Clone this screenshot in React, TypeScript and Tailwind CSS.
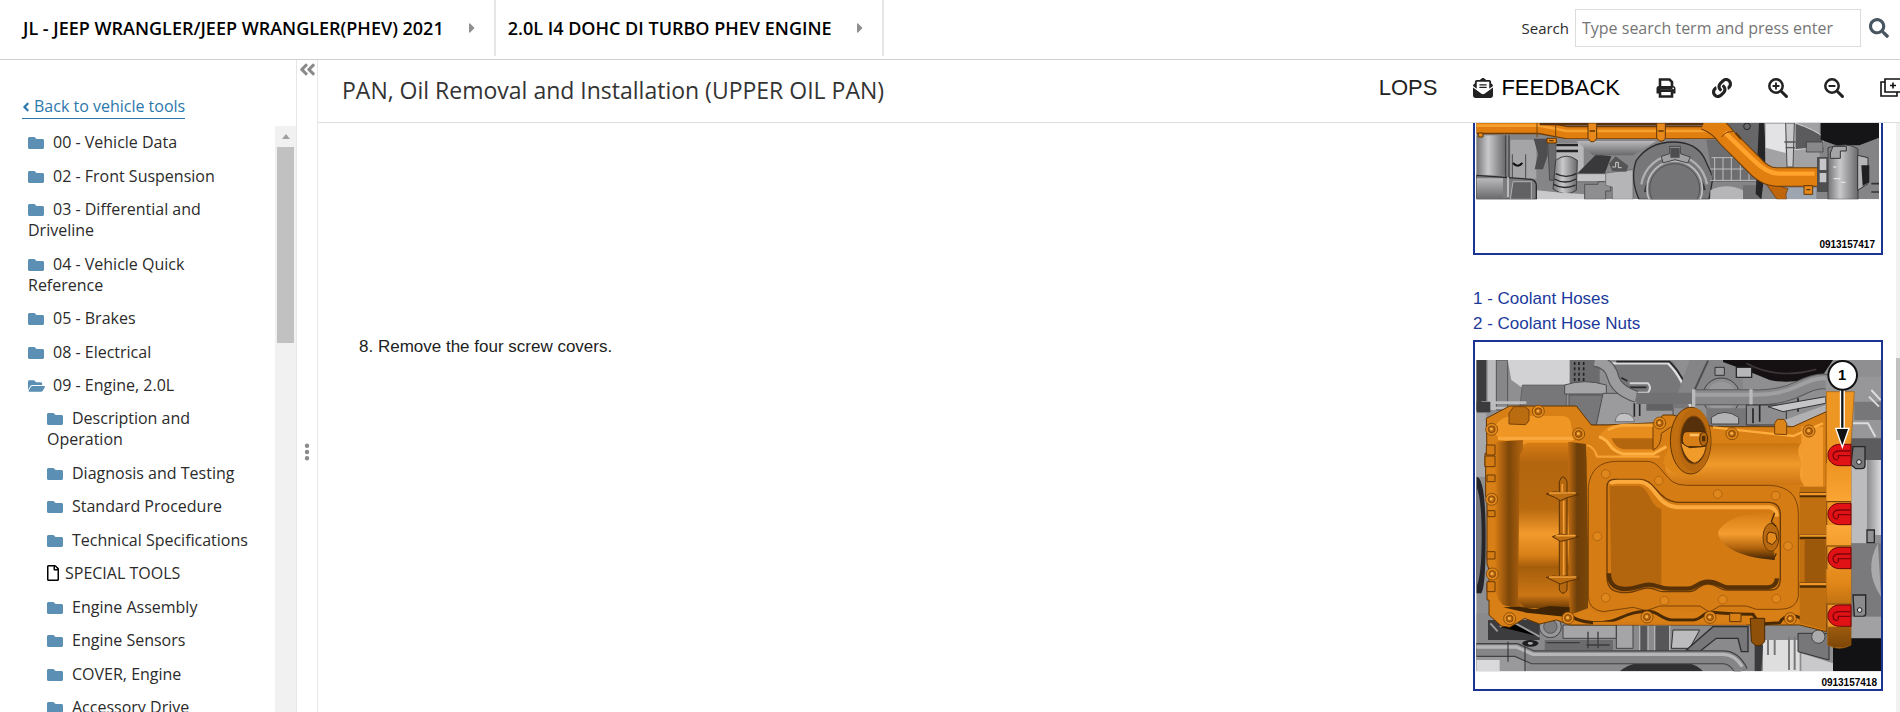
import React from "react";
import { FaAngleDoubleLeft, FaAngleLeft, FaFolder, FaFolderOpen, FaLink, FaRegFile, FaSearch, FaCaretRight } from "react-icons/fa";
import { FaEllipsisVertical, FaEnvelopeOpenText } from "react-icons/fa6";

type Node = { label: string; kind?: "folder" | "open" | "file"; children?: Node[] };

const tree: Node[] = [
  { label: "00 - Vehicle Data" },
  { label: "02 - Front Suspension" },
  { label: "03 - Differential and Driveline" },
  { label: "04 - Vehicle Quick Reference" },
  { label: "05 - Brakes" },
  { label: "08 - Electrical" },
  {
    label: "09 - Engine, 2.0L",
    kind: "open",
    children: [
      { label: "Description and Operation" },
      { label: "Diagnosis and Testing" },
      { label: "Standard Procedure" },
      { label: "Technical Specifications" },
      { label: "SPECIAL TOOLS", kind: "file" },
      { label: "Engine Assembly" },
      { label: "Engine Sensors" },
      { label: "COVER, Engine" },
      { label: "Accessory Drive" },
    ],
  },
];

function TreeIcon({ kind = "folder" }: { kind?: Node["kind"] }) {
  if (kind === "file") return <FaRegFile className="mr-1.5 inline h-4 w-3 align-[-2px] text-black" />;
  if (kind === "open") return <FaFolderOpen className="mr-2 inline h-4 w-[17px] align-[-3px] text-[#5b8fb3]" />;
  return <FaFolder className="mr-[9px] inline size-4 align-[-3px] text-[#5b8fb3]" />;
}

function Tree({ nodes, nested = false }: { nodes: Node[]; nested?: boolean }) {
  return (
    <ul className={nested ? "pl-[19px]" : "pl-7 pr-5"}>
      {nodes.map((n) => (
        <li key={n.label} className="even:mt-px">
          <a href="#" className="block py-1.5 leading-[21px]">
            <TreeIcon kind={n.kind} />
            {n.label}
          </a>
          {n.children && <Tree nodes={n.children} nested />}
        </li>
      ))}
    </ul>
  );
}

function PrintIcon() {
  return (
    <svg viewBox="0 0 20 20" className="size-5" fill="none" stroke="#222" strokeWidth="2.6">
      <path d="M4 9V1.5h9.5L16 4v5" />
      <path d="M0.5 15.5V10.5Q0.5 8 3 8H17Q19.5 8 19.5 10.5V15.5H16V11.8H4V15.5Z" fill="#222" stroke="none" />
      <path d="M4 12.8h12v5.7H4z" fill="#fff" />
      <circle cx="17.2" cy="10.4" r="0.8" fill="#fff" stroke="none" />
    </svg>
  );
}

function ZoomIcon({ plus = false }: { plus?: boolean }) {
  return (
    <svg viewBox="0 0 20 20" className="size-5" fill="none" stroke="#222" strokeLinecap="round">
      <circle cx="8" cy="8" r="6.7" strokeWidth="2.5" />
      <path d="M13.2 13.2L18.4 18.4" strokeWidth="3" />
      <path d={plus ? "M5.3 8h5.4M8 5.3v5.4" : "M5.3 8h5.4"} strokeWidth="1.9" />
    </svg>
  );
}

function DuplicateIcon() {
  return (
    <svg viewBox="0 0 22 20" className="h-5 w-[22px]" fill="none" stroke="#111" strokeWidth="1.6">
      <path d="M5 1h16v13H5z" />
      <path d="M5 4H1v14h16v-4M13 4.5v6M10 7.5h6" />
    </svg>
  );
}

function Bolt({ x, y, r = 18 }: { x: number; y: number; r?: number }) {
  return (
    <g>
      <circle cx={x} cy={y} r={r} fill="#e58a1b" stroke="#7c4609" strokeWidth="2.5" />
      <circle cx={x} cy={y} r={r * 0.58} fill="#b4640c" stroke="#6b3b07" strokeWidth="2" />
      <circle cx={x - 1} cy={y - 1} r={r * 0.26} fill="#f6ac45" />
    </g>
  );
}

function CoolantHoseDrawing() {
  return (
    <svg viewBox="46 38 1218 231" className="block w-full" role="img" aria-label="Coolant hoses">
      <defs>
        <linearGradient id="a-grey" x1="0" y1="0" x2="0" y2="1">
          <stop offset="0" stopColor="#b9b9bb" />
          <stop offset="1" stopColor="#68686b" />
        </linearGradient>
        <linearGradient id="a-cyl" x1="0" y1="0" x2="1" y2="0">
          <stop offset="0" stopColor="#747477" />
          <stop offset="0.4" stopColor="#c9c9cb" />
          <stop offset="1" stopColor="#68686b" />
        </linearGradient>
        <clipPath id="a-clip"><rect x="50" y="38" width="1208" height="229" /></clipPath>
      </defs>
      <g clipPath="url(#a-clip)">
        <rect x="50" y="38" width="1208" height="229" fill="#858588" />
        <rect x="50" y="75" width="88" height="120" fill="url(#a-cyl)" />
        <path d="M138 75V200M148 75V200" stroke="#444" strokeWidth="4" />
        <path d="M152 88H230V205H152Z" fill="#a5a5a8" />
        <path d="M158 132V205M198 132V205" stroke="#4a4a4c" strokeWidth="3" />
        <path d="M160 158q14 16 28 0" stroke="#111" strokeWidth="6" fill="none" />
        <path d="M222 85h42v50l-14 42h-25l10-45z" fill="#4d4d50" />
        <path d="M264 90h26v120h-20z" fill="#69696c" stroke="#38383a" strokeWidth="2" />
        <path d="M290 98h82v95h-82z" fill="#b7b7ba" />
        <path d="M290 104h65M290 122h65" stroke="#222" strokeWidth="7" />
        <path d="M352 190L410 132 455 138 435 190z" fill="#39393b" />
        <path d="M350 92H590L520 135H400z" fill="url(#a-grey)" />
        <path d="M350 190H440V214H350z" fill="#c4c4c6" stroke="#555" strokeWidth="2" />
        <path d="M50 195L215 207Q232 212 230 230V267H50z" fill="#7b7b7e" stroke="#2b2b2d" strokeWidth="4" />
        <path d="M50 204H130V267H50z" fill="url(#a-grey)" />
        <path d="M160 214H215V267H152z" fill="#626265" stroke="#b0b0b2" strokeWidth="3" />
        <path d="M145 200v60" stroke="#dcdcde" strokeWidth="4" />
        <path d="M288 150Q320 125 353 150L350 240Q318 262 280 236z" fill="url(#a-cyl)" stroke="#404042" strokeWidth="3" />
        <path d="M288 190q32 16 62 0M284 206q32 18 66 0M282 222q30 18 66 2" stroke="#252527" strokeWidth="4" fill="none" />
        <path d="M232 240L290 246 375 252V267H232z" fill="#c9c9cb" />
        <path d="M375 222h40v-8h38v28h-15v25H375z" fill="#8e8e91" stroke="#555" strokeWidth="3" />
        <path d="M438 188L520 178V267H458V230L438 225z" fill="#b5b5b8" stroke="#606063" strokeWidth="2" />
        <path d="M448 160l20-22 38 28-6 18-42-2z" fill="#555" />
        <path d="M458 170h10v-14h8v16h10" stroke="#ccc" strokeWidth="3" fill="none" />
        <path d="M530 150Q570 95 640 95T735 145L760 200 748 267H538Q510 205 530 150z" fill="#77777a" stroke="#2b2b2d" strokeWidth="4" />
        <path d="M545 222A100 105 0 0 1 742 222" fill="none" stroke="#b0b0b3" strokeWidth="7" />
        <path d="M556 245A91 92 0 0 1 735 240" fill="none" stroke="#39393b" strokeWidth="7" />
        <circle cx="645" cy="235" r="83" fill="#7f7f82" stroke="#bebec0" strokeWidth="5" />
        <circle cx="645" cy="235" r="75" fill="#747477" stroke="#3c3c3e" strokeWidth="2" />
        <path d="M605 138l25-8v-22h32v22l30 10-8 18-38-10-36 10z" fill="#a0a0a3" stroke="#444" strokeWidth="3" />
        <path d="M632 112h28v30h-28z" fill="#4d4d50" />
        <path d="M740 88H790L905 215H760z" fill="#6e6e71" />
        <g stroke="#bdbdbf" strokeWidth="3">
          <path d="M756 142H820M752 176H850M752 210H895M765 140V212M790 140V212M815 142V212M842 165V212M868 190V212" />
        </g>
        <path d="M752 240Q800 215 850 240V267H752z" fill="#b6b6b9" />
        <path d="M850 225H905V267H850z" fill="#707073" />
        <path d="M800 38H905V130H860z" fill="#67676a" />
        <circle cx="862" cy="48" r="10" fill="none" stroke="#242426" strokeWidth="3" />
        <path d="M898 38H916V180L905 267 888 250z" fill="#252528" />
        <path d="M914 38H1080V150L1070 180H920z" fill="#a2a2a5" />
        <path d="M918 40H978V128L918 112z" fill="#e3e3e5" />
        <path d="M1006 38Q1070 60 1090 80V110L1006 118z" fill="#5b5b5e" stroke="#d5d5d7" strokeWidth="3" />
        <path d="M978 38H1004L1000 170H982z" fill="#c9c9cc" stroke="#4d4d50" strokeWidth="3" />
        <path d="M974 95h34M978 112h28" stroke="#555" strokeWidth="4" />
        <path d="M1083 38H1258V82L1200 105H1130L1083 88z" fill="#151517" />
        <path d="M1200 105L1258 85V145H1200z" fill="#838386" />
        <path d="M970 232H1070V267H970z" fill="#9da5b1" />
        <path d="M1040 95H1090V125H1040z" fill="#88888b" stroke="#333" strokeWidth="2" />
        <path d="M1072 140H1110V245H1072z" fill="#4e4e51" />
        <path d="M1080 145h20v34h-20zM1080 188h20v28h-20z" fill="#c6c6c9" />
        <path d="M1105 112Q1165 95 1195 115V267H1105z" fill="url(#a-cyl)" stroke="#444" strokeWidth="3" />
        <path d="M1120 108h40v14h-18v22h-30v-16z" fill="#a4a4a7" stroke="#333" strokeWidth="3" />
        <path d="M1122 205h20M1145 216h12M1120 170h10" stroke="#eee" strokeWidth="3" />
        <path d="M1194 135L1225 142V220L1194 240z" fill="#b5b5b8" stroke="#333" strokeWidth="3" />
        <path d="M1205 165h24v50l-20 12z" fill="#202022" />
        <path d="M1235 220H1258M1235 245H1258" stroke="#333" strokeWidth="5" />
        <path d="M915 215L985 235Q975 252 980 267H952z" fill="#bf650c" stroke="#5d3205" strokeWidth="2" />
        <g fill="none" strokeLinejoin="round">
          <path d="M50 52H240L320 66H790" stroke="#6d3b06" strokeWidth="40" />
          <path d="M50 51H240L320 67H790" stroke="#e07e10" strokeWidth="33" />
          <path d="M50 46H240L320 62H780" stroke="#f6a12f" strokeWidth="8" />
          <path d="M240 40H740" stroke="#59300a" strokeWidth="10" />
          <path d="M735 30Q775 45 800 80L880 160Q915 200 950 200H1072" stroke="#6d3b06" strokeWidth="58" />
          <path d="M735 30Q775 45 800 80L880 160Q915 200 950 200H1072" stroke="#e07e10" strokeWidth="52" />
          <path d="M795 66L880 148Q920 188 955 190H1065" stroke="#ffa32c" strokeWidth="13" />
          <path d="M786 80q12-18 34-16M232 38v42M288 44v36" stroke="#7b4206" strokeWidth="3" />
        </g>
        <g fill="#e8891b" stroke="#613604" strokeWidth="3">
          <path d="M385 38h26v46l-8 10h-10l-8-10zM591 38h26v46l-7 8h-10l-9-8z" />
          <path d="M262 84h28v14h-28zM1033 226h26v26h-26zM56 68h14v12h-14z" />
          <path d="M828 68l16 18" strokeWidth="6" />
        </g>
        <path d="M390 62h16M596 62h16M1040 238h12M268 91h14" stroke="#613604" strokeWidth="4" />
      </g>
    </svg>
  );
}

function OilPanDrawing() {
  return (
    <svg viewBox="46 36 1218 990" className="block w-full" role="img" aria-label="Upper oil pan screw covers">
      <defs>
        <linearGradient id="b-left" x1="0" y1="0" x2="0" y2="1">
          <stop offset="0" stopColor="#d67c14" />
          <stop offset="0.12" stopColor="#b3650f" />
          <stop offset="0.4" stopColor="#b96a10" />
          <stop offset="0.55" stopColor="#f39a2c" />
          <stop offset="0.68" stopColor="#d87f17" />
          <stop offset="0.75" stopColor="#a55d0b" />
          <stop offset="0.92" stopColor="#cc7615" />
          <stop offset="1" stopColor="#6e3d06" />
        </linearGradient>
        <linearGradient id="b-edge" x1="0" y1="0" x2="1" y2="0">
          <stop offset="0" stopColor="#d67c14" />
          <stop offset="0.5" stopColor="#7d4609" />
          <stop offset="1" stopColor="#b3650f" />
        </linearGradient>
        <linearGradient id="b-shade" x1="0" y1="0" x2="1" y2="0">
          <stop offset="0" stopColor="#c16d10" />
          <stop offset="0.45" stopColor="#6e3f0a" />
          <stop offset="1" stopColor="#794509" />
        </linearGradient>
        <linearGradient id="b-tube" x1="0" y1="0" x2="0" y2="1">
          <stop offset="0" stopColor="#c8740f" />
          <stop offset="0.5" stopColor="#f09a2b" />
          <stop offset="1" stopColor="#cd7613" />
        </linearGradient>
        <linearGradient id="b-flange" x1="0" y1="0" x2="0" y2="1">
          <stop offset="0" stopColor="#ee9322" />
          <stop offset="0.3" stopColor="#ffad3c" />
          <stop offset="0.65" stopColor="#e18618" />
          <stop offset="1" stopColor="#7c4608" />
        </linearGradient>
        <linearGradient id="b-cone" x1="0" y1="0" x2="0" y2="1">
          <stop offset="0" stopColor="#d67c14" />
          <stop offset="0.45" stopColor="#f59d2f" />
          <stop offset="0.75" stopColor="#b0620c" />
          <stop offset="1" stopColor="#3d2203" />
        </linearGradient>
        <linearGradient id="b-right" x1="0" y1="0" x2="1" y2="0">
          <stop offset="0" stopColor="#8b8b8e" />
          <stop offset="1" stopColor="#dadadc" />
        </linearGradient>
        <clipPath id="b-clip"><rect x="50" y="90" width="1214" height="934" /></clipPath>
      </defs>
      <g clipPath="url(#b-clip)">
        <rect x="46" y="90" width="1218" height="934" fill="#8f8f92" />
        {/* engine block above the pan */}
        <path d="M50 90H80V240H50z" fill="#3c3c3e" />
        <path d="M84 90h26v150H84z" fill="#bcbcbf" />
        <path d="M110 90h34v150h-34z" fill="#87878a" stroke="#555" strokeWidth="3" />
        <path d="M144 90H332V175H190L155 150z" fill="#d2d2d4" />
        <path d="M188 165H320V235H180z" fill="#77777a" stroke="#555558" strokeWidth="2" />
        <path d="M65 218H200M65 234H180" stroke="#bdbdc0" strokeWidth="8" />
        <path d="M50 215h42v32H50z" fill="#3b3b3d" />
        <path d="M330 90H420V160H330z" fill="#6c6c6f" />
        <g stroke="#222" strokeWidth="5"><path d="M345 96v60M358 96v60M372 96v60" strokeDasharray="9 7" /></g>
        <path d="M315 165Q375 145 440 165V192H315z" fill="#a5a5a8" stroke="#4d4d50" strokeWidth="3" />
        <path d="M328 195H432V285H370L328 240z" fill="#77777a" stroke="#444" strokeWidth="2" />
        <path d="M430 190H640V285H410z" fill="#9b9b9e" stroke="#4d4d50" strokeWidth="3" />
        <path d="M440 95H640Q672 140 690 235H640V215H520L440 140z" fill="#77777a" />
        <path d="M450 100H625Q672 145 692 230" fill="none" stroke="#dededf" strokeWidth="7" />
        <path d="M470 95H630Q680 145 700 225" fill="none" stroke="#262628" strokeWidth="5" />
        <path d="M510 160h55q12 12 0 28h-60" fill="none" stroke="#d4d4d6" strokeWidth="6" />
        <path d="M510 172h50M485 143l18 10M524 220v40M540 220v38" stroke="#28282a" strokeWidth="5" />
        <path d="M466 275Q470 248 495 250T525 275z" fill="#c1c1c3" stroke="#555" strokeWidth="2" />
        <path d="M560 222h80v20h-80z" fill="#626265" />
        <path d="M690 90H850V200H650z" fill="#858588" />
        <path d="M745 92L700 190" stroke="#4d4d50" strokeWidth="6" />
        <path d="M766 112h28v24h-28z" fill="#9d9da0" stroke="#333" strokeWidth="3" />
        <circle cx="785" cy="200" r="56" fill="#8c8c8f" stroke="#3f3f42" strokeWidth="3" />
        <circle cx="785" cy="200" r="45" fill="#98989b" />
        <path d="M790 90H1120L1090 135Q1000 165 930 150 860 120 790 96z" fill="#151112" />
        <path d="M860 100Q950 150 1070 118" stroke="#3e3536" strokeWidth="5" fill="none" />
        <path d="M830 112h46v30h-46z" fill="#b6b6b8" stroke="#29292b" strokeWidth="4" />
        <g fill="none">
          <path d="M405 92Q450 100 460 140T530 200" stroke="#555558" strokeWidth="37" />
          <path d="M405 92Q450 100 460 140T530 200" stroke="#9c9c9f" strokeWidth="30" />
          <path d="M530 205H700" stroke="#717174" strokeWidth="34" />
          <path d="M700 202H880Q960 205 1020 175T1110 158" stroke="#58585b" strokeWidth="48" />
          <path d="M700 202H880Q960 205 1020 175T1110 158" stroke="#88888b" strokeWidth="42" />
          <path d="M700 194H880Q960 196 1020 166T1110 148" stroke="#a0a0a3" strokeWidth="12" />
          <path d="M702 178v52M874 178v50" stroke="#bababc" strokeWidth="10" />
        </g>
        <path d="M740 235H900V290H740z" fill="#77777a" />
        <path d="M755 262q40-30 82 0v20h-82z" fill="#b3b3b6" stroke="#444" strokeWidth="3" />
        <path d="M860 225h120v60H860z" fill="#8d8d90" stroke="#333" strokeWidth="3" />
        <path d="M880 235v45M900 225v50M1015 205v40" stroke="#252527" strokeWidth="5" />
        <path d="M925 230L1098 200V220L970 245z" fill="#c5c5c7" stroke="#333" strokeWidth="3" />
        <path d="M960 275L1098 225V250L1010 295z" fill="#b1b1b4" />
        {/* right housing */}
        <path d="M1098 140H1264V385H1098z" fill="#97979a" />
        <path d="M1184 215H1264V270H1184z" fill="#77777a" />
        <path d="M1180 280h45l22 40M1235 180l28 30M1228 200l30 30" stroke="#dcdcde" strokeWidth="6" fill="none" />
        <path d="M1174 325H1264V390H1174z" fill="#5c5c5f" />
        <path d="M1174 390H1222V640H1174z" fill="#bcbcbe" />
        <path d="M1222 390H1264V615H1222z" fill="url(#b-right)" />
        <path d="M1180 350h36v56q0 10-10 10h-18l-14-12z" fill="#77777a" stroke="#262628" strokeWidth="4" />
        <circle cx="1198" cy="396" r="7" fill="#ddd" stroke="#222" strokeWidth="3" />
        <path d="M1174 640H1264V860H1174z" fill="#7a7a7d" />
        <path d="M1222 600h22v38h-22z" fill="#929295" stroke="#29292b" strokeWidth="4" />
        <path d="M1255 640Q1210 720 1264 800z" fill="#aaaaad" />
        <path d="M1180 795h38v56q0 8-10 8h-24z" fill="#8a8a8d" stroke="#262628" strokeWidth="4" />
        <circle cx="1200" cy="840" r="7" fill="#ddd" stroke="#222" strokeWidth="3" />
        <path d="M1176 860H1264V925H1176z" fill="#a1a1a4" />
        {/* left pulley edge */}
        <path d="M50 250H80V440H50z" fill="#a8a8ab" />
        <path d="M50 440Q78 440 78 620T60 790H50z" fill="#26262a" />
        <path d="M50 470Q66 500 66 620T50 770z" fill="#77777a" />
        {/* lower engine */}
        <path d="M50 850H1110V1024H50z" fill="#8a8a8d" />
        <path d="M85 870H240V930H85z" fill="#3c3c3f" />
        <path d="M120 890l40-14 80 44M92 880l22 24" stroke="#999" strokeWidth="6" />
        <circle cx="272" cy="890" r="33" fill="#98989b" stroke="#424245" strokeWidth="3" />
        <circle cx="272" cy="890" r="20" fill="#7c7c7f" stroke="#555" strokeWidth="3" />
        <path d="M310 885H470V925H310zM470 880h50v75h-50z" fill="#a5a5a8" stroke="#444" strokeWidth="3" />
        <path d="M255 930H460V960H255z" fill="#6b6b6e" />
        <path d="M260 938h100M380 945h70M385 905v50M415 905v50" stroke="#3b3b3e" strokeWidth="4" />
        <path d="M540 885h25v80h-25zM585 885h45v80h-45z" fill="#565659" stroke="#b4b4b7" strokeWidth="4" />
        <path d="M640 900h80l-30 55h-55z" fill="#bcbcbf" stroke="#333" strokeWidth="3" />
        <path d="M680 960L760 890H865V965H845L835 925H770L715 968z" fill="#77777a" stroke="#2e2e30" strokeWidth="4" />
        <path d="M50 945H200V1024H50z" fill="#99999c" />
        <path d="M50 990H120V1024H50z" fill="#d9d9db" />
        <path d="M480 1024Q520 990 610 990T730 1024z" fill="#303033" />
        <g fill="none">
          <path d="M46 960H170L220 982H790Q825 982 845 1024" stroke="#424245" strokeWidth="42" />
          <path d="M46 960H170L220 982H790Q825 982 845 1024" stroke="#858588" strokeWidth="35" />
          <path d="M46 951H170L220 973H790Q825 973 848 1010" stroke="#b6b6b9" strokeWidth="10" />
        </g>
        <ellipse cx="212" cy="940" rx="24" ry="10" fill="#1d1d1f" />
        <ellipse cx="212" cy="940" rx="8" ry="4" fill="#aaa" />
        <path d="M196 950v74M145 935v60" stroke="#29292b" strokeWidth="3" />
        <path d="M910 930H1020V1024H910z" fill="#dededf" />
        <path d="M925 930v45M945 930v45M988 920v100M1005 920v100" stroke="#78787b" strokeWidth="6" />
        <path d="M1025 970L1120 1000V1024H1025z" fill="#c9c9cb" />
        <path d="M1015 910H1108V990L1015 965z" fill="#77777a" stroke="#333" strokeWidth="3" />
        <circle cx="1076" cy="920" r="20" fill="#aaaaad" stroke="#444" strokeWidth="3" />
        <path d="M885 945H910L905 1024H885z" fill="#3a3a3d" />
        <path d="M1120 925H1264V1024H1120z" fill="#121214" />
        {/* pan body */}
        <path d="M80 265L150 228H350L395 285H440L590 278 610 255H640L760 290H1000L1100 245V905L1020 885H330L290 870 240 882 195 865 150 892 125 888 88 855V810H82V760H88V720L82 700V500H78V410H76V370H82z" fill="#d87f16" stroke="#633704" strokeWidth="3" />
        <path d="M100 300Q110 268 150 258H310Q335 260 335 290L345 330 310 345H215L120 330z" fill="#f09625" />
        <path d="M115 325H340" stroke="#ffb146" strokeWidth="10" opacity="0.7" />
        <path d="M148 282V250L162 230H195L208 240V272L198 284z" fill="#bb6b10" stroke="#7a4508" strokeWidth="3" />
        <path d="M106 335L190 330V840L130 825Q106 800 106 770z" fill="url(#b-edge)" />
        <path d="M180 375L200 338H330V835H195L175 810z" fill="url(#b-left)" />
        <path d="M325 335L378 342 385 420V835L330 855z" fill="url(#b-shade)" />
        <path d="M130 832L180 830 225 838 270 828 330 832V862L200 848z" fill="#3f2506" />
        <path d="M80 345h26v30H80zM76 378h30v32H76zM82 455h24v-20H82zM84 560h22v-18H84zM82 665h24v22H82zM82 755h24v30H82z" fill="#d57b13" stroke="#6b3b07" strokeWidth="3" />
        {/* cross-shaped rib */}
        <path d="M299 455Q310 425 322 455V780Q310 800 299 780z" fill="#b66810" stroke="#5b3203" strokeWidth="3" />
        <path d="M260 492Q285 482 300 488L322 490 358 493 322 503 302 512 285 502zM278 620L302 612 358 620 322 630 302 634zM260 742Q282 735 302 740L322 738 360 745 322 755 302 762z" fill="#bc6d12" stroke="#5b3203" strokeWidth="3" />
        <path d="M308 462V485M312 512V612M312 635V736M268 489H348M288 617H348M268 741H350" stroke="#f5a138" strokeWidth="5" />
        {/* lower cover plate */}
        <path d="M380 345Q405 350 410 380H560Q600 380 620 345L650 420H1020V835L885 842 760 850 560 838 440 860 388 840z" fill="#d67c14" />
        <path d="M382 345Q405 352 412 380H600" stroke="#f6a234" strokeWidth="7" fill="none" />
        <path d="M420 315Q450 280 480 285H580V370H490Q455 370 440 335z" fill="#e78d1e" />
        <path d="M455 325H580V358H490Q465 352 455 325z" fill="#b3660e" />
        <path d="M418 320Q440 328 450 345T490 372H580L620 350" fill="none" stroke="#ffb144" strokeWidth="9" />
        <path d="M445 300Q470 286 500 286H578" fill="none" stroke="#f9a638" strokeWidth="9" />
        <path d="M580 290V360Q605 350 605 310L635 290" fill="none" stroke="#713f07" strokeWidth="3" />
        <path d="M735 340H1010Q1035 345 1030 390V465H660Q610 440 615 380L680 420z" fill="url(#b-tube)" />
        <path d="M1025 290H1090V470H1035Q1010 440 1028 400 1005 360 1025 340z" fill="#f9a334" opacity="0.8" />
        <path d="M760 292L1000 318 1090 280" stroke="#ffad3d" strokeWidth="7" fill="none" />
        <path d="M386 470Q395 395 470 394H560C600 394 605 430 640 456Q655 466 680 466H930Q1015 470 1016 550V800Q1010 838 960 838H890L860 828H780L750 846 720 828H600L560 842 520 832 430 845Q386 838 386 800z" fill="#d67c14" stroke="#7c4508" strokeWidth="3" />
        <path d="M442 470Q442 450 462 448H540C590 448 590 515 660 517H930Q960 520 962 550V745Q962 780 935 780H800C775 780 775 762 745 762S715 785 690 785H610C590 785 590 774 565 774S530 788 500 788C465 788 442 780 442 740z" fill="#d47a13" stroke="#6b3b07" strokeWidth="4" />
        <path d="M450 468H535C570 470 570 530 605 536V770H570Q530 770 500 780L455 765Z" fill="#b4660e" />
        <path d="M452 462Q455 455 475 455H540C590 460 590 530 655 532H930Q950 535 952 560" fill="none" stroke="#fbaa3e" strokeWidth="12" />
        <path d="M448 730C448 766 470 778 500 777S545 764 568 764 600 776 630 776H685C708 776 715 755 745 755S785 772 805 772H925Q950 770 952 745" fill="none" stroke="#4a2a05" strokeWidth="13" opacity="0.9" />
        <path d="M775 605Q800 565 860 555L935 548 945 690Q860 685 810 655 775 632 775 605z" fill="url(#b-cone)" />
        <ellipse cx="934" cy="622" rx="24" ry="42" fill="#b96a10" stroke="#6b3b07" strokeWidth="3" />
        <path d="M928 606l20 4 4 18-14 16-16-8v-20z" fill="#e48a1c" stroke="#4f2b03" strokeWidth="3" />
        <path d="M945 548L935 575 950 590M940 690L950 670" stroke="#4f2b03" strokeWidth="4" fill="none" />
        {[[438, 432], [597, 452], [774, 492], [948, 497], [413, 619], [985, 648], [438, 803], [614, 812], [789, 809], [950, 806]].map(([x, y]) => (
          <circle key={`${x}-${y}`} cx={x} cy={y} r="13" fill="#df871c" stroke="#b3670f" strokeWidth="3" />
        ))}
        {/* filter mount */}
        <path d="M610 400Q640 300 680 290L750 330Q750 400 700 432 640 445 610 400z" fill="#df8619" />
        <ellipse cx="693" cy="332" rx="61" ry="100" fill="#c06e0f" stroke="#613604" strokeWidth="3" />
        <ellipse cx="704" cy="330" rx="49" ry="96" fill="#b8680e" />
        <ellipse cx="702" cy="330" rx="40" ry="72" fill="#56300a" stroke="#8b4e0a" strokeWidth="3" />
        <path d="M665 340Q675 390 705 398 730 390 738 350L690 355z" fill="#f19b2b" />
        <path d="M680 305H730Q742 312 742 328T730 350H685Q666 345 668 325T680 305z" fill="#d77f16" stroke="#4a2902" strokeWidth="3" />
        <path d="M690 315h28" stroke="#ffc164" strokeWidth="7" />
        <ellipse cx="732" cy="327" rx="12" ry="21" fill="#b3650e" stroke="#4a2902" strokeWidth="3" />
        <path d="M727 318h10v16h-10z" fill="#512d05" />
        {/* bottom rim */}
        <path d="M335 858C360 880 430 884 470 868S520 846 560 844 600 868 640 870H700C725 870 730 847 755 847S800 853 880 853L900 882 960 878C975 852 1010 852 1030 870L1100 888" fill="none" stroke="#4a2a05" strokeWidth="9" />
        <path d="M400 880H860" fill="none" stroke="#d67c14" strokeWidth="9" />
        <path d="M810 850h34v25h-34z" fill="#d87f16" stroke="#613604" strokeWidth="3" />
        <path d="M872 865H915V935Q895 960 875 935z" fill="#8f5109" stroke="#4a2902" strokeWidth="3" />
        {/* bellhousing flange */}
        <path d="M1020 470H1100V900L1020 880z" fill="#bf6e10" />
        <path d="M1035 630H1098V760H1035z" fill="#864a07" opacity="0.6" />
        <path d="M1020 494H1100M1020 620H1100M1020 765H1100" stroke="#4e2b03" strokeWidth="16" />
        <path d="M1020 492H1100M1020 617H1100M1020 762H1100" stroke="#f09728" strokeWidth="7" />
        <path d="M1100 185H1184L1174 340V945Q1140 965 1104 945z" fill="#ee9624" stroke="#a05b0b" strokeWidth="2" />
        <path d="M1100 400H1174V515H1100zM1100 585H1174V650H1100zM1100 718H1174V820H1100zM1104 890H1174V945Q1140 962 1104 945z" fill="url(#b-flange)" />
        <path d="M1100 515H1174M1100 648H1174M1104 822H1174" stroke="#633704" strokeWidth="3" />
        {[375, 552, 684, 857].map((y) => (
          <g key={y}>
            <path d={`M1174 ${y - 32}H1140C1120 ${y - 32} 1105 ${y - 18} 1105 ${y}S1120 ${y + 32} 1140 ${y + 32}H1174z`} fill="#e01216" stroke="#6d0508" strokeWidth="3" />
            <path d={`M1172 ${y - 12}H1140C1128 ${y - 12} 1120 ${y - 6} 1120 ${y + 3}Q1122 ${y + 15} 1134 ${y + 15}M1136 ${y + 12}V${y + 2}H1172`} fill="none" stroke="#7d0509" strokeWidth="4" />
          </g>
        ))}
        {[[236, 244], [96, 298], [357, 312], [600, 279], [817, 311], [1048, 303], [96, 508], [98, 732], [150, 866], [325, 864], [562, 861], [751, 862], [992, 866]].map(([x, y]) => (
          <Bolt key={`${x}-${y}`} x={x} y={y} />
        ))}
        <path d="M945 312V280l8-12h20l8 12v34z" fill="#dd8519" stroke="#754107" strokeWidth="3" />
        <path d="M1148 175V325" stroke="#fff" strokeWidth="15" />
        <path d="M1148 175V325" stroke="#111" strokeWidth="7" />
        <path d="M1128 295L1148 352 1168 295z" fill="#111" stroke="#fff" strokeWidth="4" />
        <circle cx="1149" cy="136" r="43" fill="#fff" stroke="#111" strokeWidth="6" />
        <text x="1147" y="151" textAnchor="middle" className="fill-black text-[44px] font-bold">1</text>
      </g>
    </svg>
  );
}

const crumbs = ["JL - JEEP WRANGLER/JEEP WRANGLER(PHEV) 2021", "2.0L I4 DOHC DI TURBO PHEV ENGINE"];

export default function App() {
  return (
    <div className="flex h-screen flex-col overflow-hidden bg-white font-['Open_Sans',sans-serif] text-[#2b2b2b]">
      <header className="flex h-[60px] shrink-0 items-start justify-between border-b border-[#cfcfcf]">
        <nav className="flex" aria-label="Vehicle">
          {crumbs.map((c) => (
            <button key={c} type="button" className="flex h-14 items-center gap-6 border-r-2 border-[#e6e6e6] px-3 pr-[18px] text-lg font-semibold text-black first:pl-[23px]">
              {c}
              <FaCaretRight className="h-4 w-2 text-[#8f8f8f]" />
            </button>
          ))}
        </nav>
        <form className="flex h-14 items-center pr-[11px]" role="search">
          <label htmlFor="search" className="mr-1.5 text-[15px]">Search</label>
          <input id="search" type="text" placeholder="Type search term and press enter" className="h-[38px] w-[286px] border border-[#dcdcdc] px-1.5 text-base text-[#333] placeholder:text-[#757575]" />
          <button type="submit" aria-label="Search" className="ml-2 text-[#475560]"><FaSearch className="size-5" /></button>
        </form>
      </header>

      <div className="flex min-h-0 flex-1">
        <aside className="flex w-[297px] shrink-0 flex-col border-r border-[#e6e6e6]">
          <div className="flex h-[66px] shrink-0 items-end px-[22px] pb-[7px]">
            <a href="#" className="flex items-center gap-1 border-b border-[#2b78ab] text-base leading-[23px] text-[#2b78ab]">
              <FaAngleLeft className="h-3.5 w-2" />
              Back to vehicle tools
            </a>
          </div>
          <div className="flex min-h-0 flex-1">
            <div className="min-w-0 flex-1 overflow-hidden text-base">
              <Tree nodes={tree} />
            </div>
            <div className="flex w-[21px] flex-col items-center bg-[#f1f1f1]">
              <svg viewBox="0 0 8 5" className="my-2 h-[5px] w-2" fill="#a0a0a0"><path d="M4 0l4 5H0z" /></svg>
              <div className="h-[196px] w-[17px] bg-[#c1c1c1]" />
            </div>
          </div>
        </aside>

        <div className="flex w-[21px] shrink-0 flex-col items-center border-r border-[#e6e6e6] text-[#8a8a8a]">
          <button type="button" aria-label="Collapse sidebar"><FaAngleDoubleLeft className="size-[19px]" /></button>
          <div className="flex flex-1 items-center pt-28">
            <FaEllipsisVertical className="size-5" />
          </div>
        </div>

        <main className="flex min-w-0 flex-1 flex-col">
          <div className="flex h-[63px] shrink-0 items-center justify-between border-b border-[#dedede] pb-0.5">
            <h1 className="pl-6 text-[23px] font-medium text-[#333]">PAN, Oil Removal and Installation (UPPER OIL PAN)</h1>
            <div className="flex items-center gap-9 overflow-hidden pb-1 font-['Liberation_Sans',sans-serif] text-[22px] leading-7 text-[#222]">
              <button type="button">LOPS</button>
              <button type="button" className="flex items-center gap-2 text-black"><FaEnvelopeOpenText className="size-5 text-[#222]" />FEEDBACK</button>
              <button type="button" aria-label="Print"><PrintIcon /></button>
              <button type="button" aria-label="Copy link"><FaLink className="size-5" /></button>
              <button type="button" aria-label="Zoom in"><ZoomIcon plus /></button>
              <button type="button" aria-label="Zoom out"><ZoomIcon /></button>
              <button type="button" aria-label="Open in new window" className="-mr-0.5"><DuplicateIcon /></button>
            </div>
          </div>
          <div className="flex min-h-0 flex-1 font-['Liberation_Sans',sans-serif]">
            <div className="min-w-0 flex-1 overflow-hidden pl-[41px] pr-[13px] text-[17px]">
              <section className="flex justify-end">
                <div className="w-[410px]">
                  <figure className="border-2 border-t-0 border-[#1b3494]">
                    <CoolantHoseDrawing />
                    <figcaption className="flex h-[53px] items-end justify-end px-1.5 text-[10px] leading-4 font-bold text-black">0913157417</figcaption>
                  </figure>
                  <ul className="mt-[31px] mb-1 leading-[25px] text-[#1b3a9b]">
                    <li>1 - Coolant Hoses</li>
                    <li>2 - Coolant Hose Nuts</li>
                  </ul>
                </div>
              </section>
              <section className="flex justify-between">
                <p className="leading-[14px] text-[#222]">8. Remove the four screw covers.</p>
                <figure className="w-[410px] border-2 border-[#1b3494]">
                  <OilPanDrawing />
                  <figcaption className="flex h-[17px] items-center justify-end px-1 pt-1 text-[10px] font-bold text-black">0913157418</figcaption>
                </figure>
              </section>
            </div>
            <div className="w-1 shrink-0 bg-[#f1f1f1]">
              <div className="mt-[235px] h-[82px] bg-[#c1c1c1]" />
            </div>
          </div>
        </main>
      </div>
    </div>
  );
}
